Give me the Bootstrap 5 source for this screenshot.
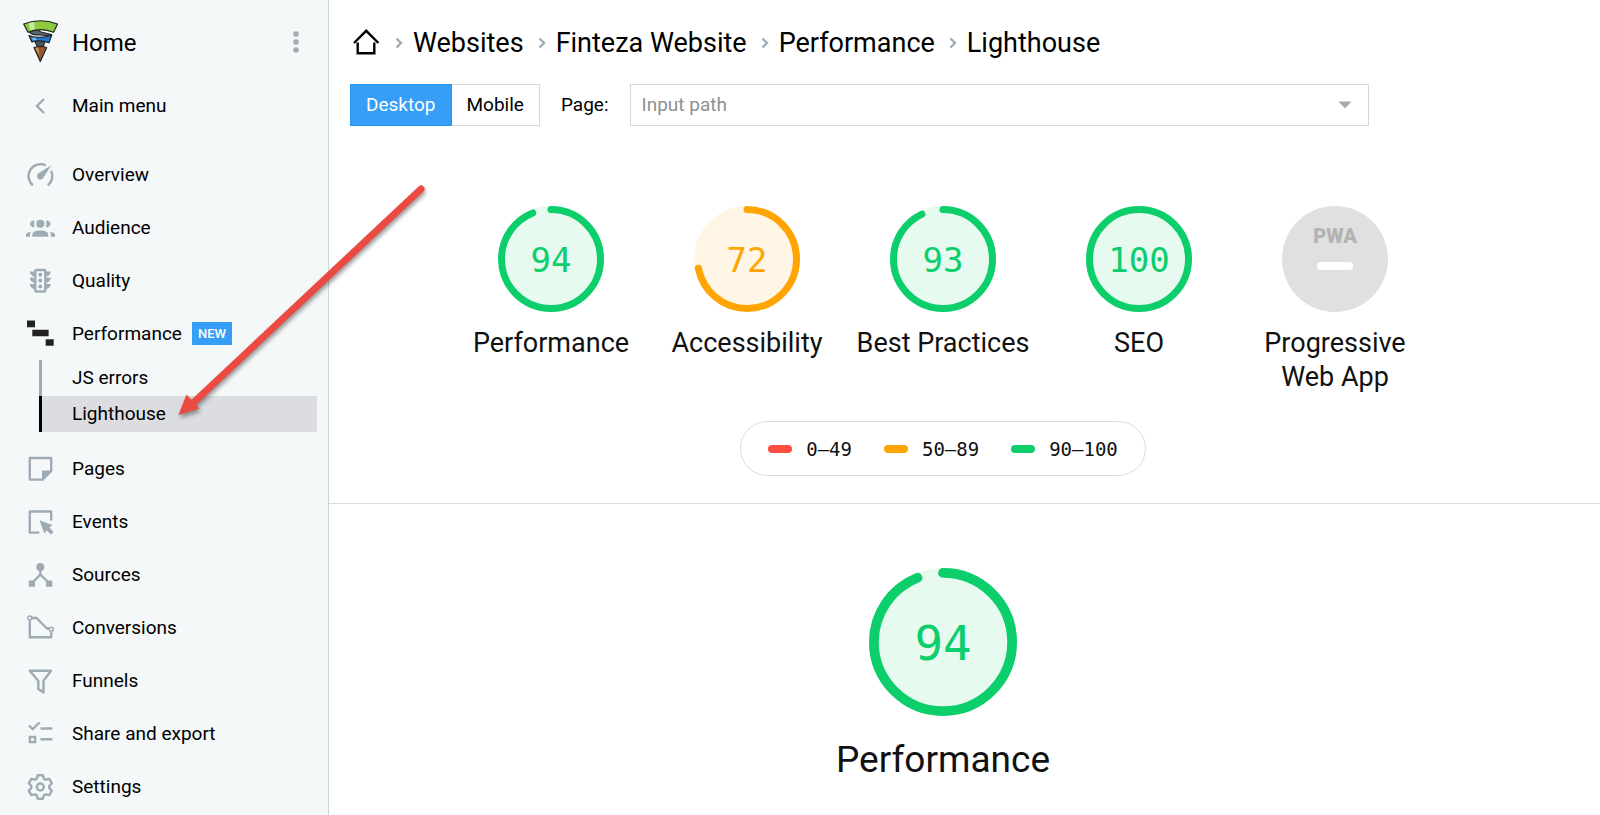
<!DOCTYPE html>
<html lang="en">
<head>
<meta charset="utf-8">
<meta name="viewport" content="width=device-width, initial-scale=1">
<title>Lighthouse – Finteza Website</title>
<link href="https://cdn.jsdelivr.net/npm/bootstrap@5.3.0/dist/css/bootstrap.min.css" rel="stylesheet">
<style>
  body { font-family: Roboto, sans-serif; font-size: 19px; line-height: 24px; color: #000; background: #fff; }
  a { color: inherit; text-decoration: none; }
  .sidebar { flex: 0 0 329px; background: #f4f8f9; border-right: 1px solid #cdd5db; }
  .side-head { height: 84px; padding-left: 23px; font-size: 24px; }
  .side-head span { padding: 2px 0 0 13px; }
  .side-link { display: flex; align-items: center; gap: 16px; height: 53px; padding-left: 24px; }
  .side-back { height: 43px; margin-bottom: 21px; }
  .side-icon { width: 32px; height: 32px; flex: none; fill: none; stroke: #9eabb5; stroke-width: 2.4; }
  .side-icon .solid { fill: #9eabb5; stroke: none; }
  .kebab { width: 32px; height: 32px; margin-right: 16px; fill: #9eabb5; }
  .tag-new { background: #369ef6; font-size: 13px; line-height: 15px; border-radius: 0; padding: 4px 6px; margin-left: -6px; font-weight: 500; }
  .sub-menu { margin: 0 11px 10px 39px; }
  .sub-menu a { display: block; height: 36px; line-height: 36px; padding-left: 30px; border-left: 3px solid #9eabb5; }
  .sub-menu a.active { background: #dcdde0; border-color: #000; }
  .crumbs { height: 84px; padding-left: 22px; font-size: 27px; line-height: 32px; }
  .crumbs .crumb { padding-top: 2px; }
  .crumb-sep { width: 8px; height: 12px; margin: 2px 10px 0 14px; fill: none; stroke: #9eabb5; stroke-width: 2.4; }
  .tools { padding-left: 21px; }
  .tools .btn { --bs-btn-font-size: 19px; --bs-btn-line-height: 24px; --bs-btn-border-radius: 0; --bs-btn-padding-x: 15px; --bs-btn-padding-y: 8px;
    --bs-btn-color: #000; --bs-btn-border-color: #d3d8de; --bs-btn-active-bg: #369ef6; --bs-btn-active-border-color: #2196f3; --bs-btn-active-color: #fff; }
  .tools label { padding: 0 21px; }
  .path-box { flex: 0 1 739px; height: 42px; border: 1px solid #d3d8de; }
  .path-box input { font-size: 19px; padding: 0 11px; border: 0; background: none; }
  .path-box input::placeholder { color: #8f9090; }
  .path-box button { width: 48px; }
  .report-part { padding-right: 43px; }
  .scores { padding-top: 80px; }
  .score-cell { width: 196px; font-size: 27px; line-height: 34px; color: #111; }
  .dial { display: block; width: 106px; height: 106px; margin: 0 auto 14px; }
  .dial-big { width: 148px; height: 148px; margin-bottom: 20px; }
  .dial circle.arc { fill: none; stroke: currentColor; stroke-width: 7; stroke-linecap: round; }
  .dial circle.disc { fill: currentColor; opacity: .1; }
  .dial text { font: 34px "DejaVu Sans Mono", monospace; fill: currentColor; text-anchor: middle; }
  .dial text.pwa { font: 900 20px Roboto, sans-serif; fill: #b3b3b3; }
  .pass { color: #0cce6b; }
  .average { color: #ffa400; }
  .legend-pill { height: 55px; padding: 0 27px; gap: 32px; border: 1px solid #dcdcdc; border-radius: 28px; margin: 27px auto; width: max-content;
    font-family: "DejaVu Sans Mono", monospace; font-size: 19px; color: #111; }
  .swatch { width: 24px; height: 8px; border-radius: 4px; margin-right: 14px; }
  .big-title { font-size: 37px; line-height: 48px; color: #111; }
  .big-score { border-top: 1px solid #dadcde; padding-top: 64px; }
  .pointer { position: absolute; left: 170px; top: 180px; width: 262px; height: 246px; pointer-events: none; filter: drop-shadow(1px 3px 2px rgba(0,0,0,.4)); }
</style>
</head>
<body>
<div class="d-flex min-vh-100 position-relative">
  <nav class="sidebar" aria-label="Main">
    <div class="side-head d-flex align-items-center">
      <a href="#" class="d-flex align-items-center">
        <svg width="36" height="44" viewBox="0 0 36 44" stroke="#222" stroke-width="1.2" stroke-linejoin="round" aria-hidden="true">
          <path fill="#5d6570" d="M6 11.5L14 9.5L18 12L28.500 14.500V16L17 15Q10 15 8 13.500Z"/>
          <path fill="#8bcb3c" d="M.7 4Q17.500-2.500 34.500 4L30.500 12.300Q17.500 7 5 12.300Z"/>
          <path fill="#c8eaa0" stroke="none" d="M5.500 3.300L11 2.100L12 9L7.500 10.300Z"/>
          <path fill="#4b5564" d="M11.500 20H22L20.500 26.500L14 26Z"/>
          <path fill="#2079cf" d="M6 15.500Q17.500 19.500 28.700 15L26 22.800Q17 19.500 8.700 21.800Z"/>
          <path fill="#7db8ee" stroke="none" d="M9 17.500L13 18.200L13.500 20L10 20.500Z"/>
          <path fill="#95592b" d="M11 27.500Q17 25.500 23.700 27.500L17.300 41.500Z"/>
          <path fill="#d09a68" stroke="none" d="M12.500 28L15 27.500L16.500 36Z"/>
        </svg>
        <span>Home</span>
      </a>
      <button class="btn p-0 border-0 ms-auto d-flex" aria-label="More">
        <svg class="kebab" viewBox="0 0 32 32"><circle cx="16" cy="8" r="2.800"/><circle cx="16" cy="16" r="2.800"/><circle cx="16" cy="24" r="2.800"/></svg>
      </button>
    </div>
    <a class="side-link side-back" href="#"><svg class="side-icon" viewBox="0 0 32 32"><path d="M20 9L13 16L20 23"/></svg>Main menu</a>
    <a class="side-link" href="#"><svg class="side-icon" viewBox="0 0 32 32"><path d="M8.800 26.300A12 12 0 0 1 21.700 6.300M27.200 11.800A12 12 0 0 1 23.800 26.300"/><path class="solid" d="M27.300 6.200L19.400 18.800A3.400 3.400 0 1 1 14.600 14.300Z"/></svg>Overview</a>
    <a class="side-link" href="#"><svg class="side-icon" viewBox="0 0 32 32"><g class="solid"><circle cx="16.300" cy="11.800" r="4.100"/><path d="M8.300 24.800V22.500C8.300 17 24.300 17 24.300 22.500V24.800ZM2 24.800V22.500Q2 20.500 6.800 20Q6 21 6 22.500V24.800ZM31 24.800V22.500Q31 20.500 26 20Q26.800 21 26.800 22.500V24.800ZM10.500 8.800A3.300 3.300 0 1 0 10.500 15Q9.600 12 10.500 8.800ZM22 8.800A3.300 3.300 0 1 1 22 15Q23 12 22 8.800Z"/></g></svg>Audience</a>
    <a class="side-link" href="#"><svg class="side-icon" viewBox="0 0 32 32"><rect x="11.300" y="5" width="10" height="21.500" rx="1"/><g class="solid"><circle cx="16.300" cy="9.700" r="2"/><circle cx="16.300" cy="15.600" r="2"/><circle cx="16.300" cy="21.500" r="2"/><path d="M5.700 6.500H10.500V11.800Q6.300 10.500 5.700 6.500ZM5.700 12.700H10.500V18Q6.300 16.700 5.700 12.700ZM5.700 19H10.500V24.300Q6.300 23 5.700 19ZM26.900 6.500H22.100V11.800Q26.300 10.500 26.900 6.500ZM26.900 12.700H22.100V18Q26.300 16.700 26.900 12.700ZM26.900 19H22.100V24.300Q26.300 23 26.900 19Z"/></g></svg>Quality</a>
    <a class="side-link" href="#"><svg class="side-icon" viewBox="0 0 32 32"><path stroke="none" fill="#222" d="M3 2.500H11V9.200H3ZM8.300 11.800H24.600V18.300H8.300ZM21.700 21.200H29.700V27.700H21.700Z"/></svg>Performance <span class="badge tag-new">NEW</span></a>
    <div class="sub-menu">
      <a href="#">JS errors</a>
      <a href="#" class="active" aria-current="page">Lighthouse</a>
    </div>
    <a class="side-link" href="#"><svg class="side-icon" viewBox="0 0 32 32"><path stroke-linejoin="round" d="M5.800 5H27.200V18L18.500 26.600H5.800Z"/><path class="solid" d="M18 17.500H28V18.500L19 27.500H18Z"/></svg>Pages</a>
    <a class="side-link" href="#"><svg class="side-icon" viewBox="0 0 32 32"><path stroke-linejoin="round" d="M15.300 26.600H5.800V5.500H27.200V14.500"/><path class="solid" d="M15.500 14.300L28.500 19L25.500 21.500L29.500 26L27 28.700L22.800 24.500L20.300 27.500Z"/></svg>Events</a>
    <a class="side-link" href="#"><svg class="side-icon" viewBox="0 0 32 32"><path d="M16.300 8V15.500L8 24M16.300 15.500L25 24"/><g class="solid"><circle cx="16.300" cy="8" r="4"/><path d="M4.700 21.500H11V27.800H4.700ZM22 21.500H28.300V27.800H22Z"/></g></svg>Sources</a>
    <a class="side-link" href="#"><svg class="side-icon" viewBox="0 0 32 32"><path stroke-linejoin="round" d="M5.800 8.500V25.300H27.200V20M8 6H12.500L23 16.500H25"/><g stroke-width="1.500"><circle cx="5.800" cy="6" r="2"/><circle cx="27.300" cy="17.300" r="2"/></g></svg>Conversions</a>
    <a class="side-link" href="#"><svg class="side-icon" viewBox="0 0 32 32"><path stroke-linejoin="round" d="M5.700 5.800H27L19.500 15.800V27.500L14.300 24V15.800Z"/></svg>Funnels</a>
    <a class="side-link" href="#"><svg class="side-icon" viewBox="0 0 32 32"><path d="M5 7.500L8.700 11L15.500 4.500M16.500 10.500H28.300M16.500 21.300H28.300M5.900 18.900H11.100V24.100H5.900Z"/></svg>Share and export</a>
    <a class="side-link" href="#"><svg class="side-icon" viewBox="-16.300 -16 32 32"><path stroke-linejoin="round" d="M-3.600-8.300L-2.500-11.800H2.500L3.600-8.300L5.400-7.300L9-8.100L11.500-3.700L9-1V1L11.500 3.700L9 8.100L5.400 7.300L3.600 8.300L2.500 11.800H-2.500L-3.600 8.300L-5.400 7.300L-9 8.100L-11.500 3.700L-9 1V-1L-11.500-3.700L-9-8.100L-5.400-7.300Z"/><circle r="3.500"/></svg>Settings</a>
  </nav>

  <main class="flex-grow-1">
    <nav class="crumbs d-flex align-items-center" aria-label="Breadcrumb">
      <a href="#" aria-label="Home" class="d-flex"><svg width="30" height="30" viewBox="0 0 30 30" fill="none" stroke="#000" stroke-width="2.400"><path d="M3 16L15.200 3.800L27.400 16M6.700 15.500V26.300H23.300V15.500"/></svg></a>
      <svg class="crumb-sep" viewBox="0 0 8 12"><path d="M1.500 1.500L6 6L1.500 10.500"/></svg><a class="crumb" href="#">Websites</a>
      <svg class="crumb-sep" viewBox="0 0 8 12"><path d="M1.500 1.500L6 6L1.500 10.500"/></svg><a class="crumb" href="#">Finteza Website</a>
      <svg class="crumb-sep" viewBox="0 0 8 12"><path d="M1.500 1.500L6 6L1.500 10.500"/></svg><a class="crumb" href="#">Performance</a>
      <svg class="crumb-sep" viewBox="0 0 8 12"><path d="M1.500 1.500L6 6L1.500 10.500"/></svg><a class="crumb" href="#">Lighthouse</a>
    </nav>

    <div class="tools d-flex align-items-center">
      <div class="btn-group" role="group" aria-label="Device">
        <button class="btn active" type="button">Desktop</button>
        <button class="btn" type="button">Mobile</button>
      </div>
      <label for="path">Page:</label>
      <div class="path-box d-flex">
        <input id="path" class="form-control shadow-none rounded-0" type="text" placeholder="Input path">
        <button class="btn p-0 border-0 d-flex align-items-center justify-content-center" type="button" aria-label="Show paths"><svg width="14" height="8" viewBox="0 0 14 8" fill="#9eabb5"><path d="M.5.500H13.500L7 7.500Z"/></svg></button>
      </div>
    </div>

    <section class="report-part scores">
      <div class="d-flex justify-content-center text-center">
        <div class="score-cell">
          <svg class="dial pass" viewBox="0 0 106 106"><circle class="disc" cx="53" cy="53" r="53"/><circle class="arc" cx="53" cy="53" r="49.500" pathLength="100" stroke-dasharray="94 100" transform="rotate(-90 53 53)"/><text x="53" y="66">94</text></svg>
          Performance
        </div>
        <div class="score-cell">
          <svg class="dial average" viewBox="0 0 106 106"><circle class="disc" cx="53" cy="53" r="53"/><circle class="arc" cx="53" cy="53" r="49.500" pathLength="100" stroke-dasharray="72 100" transform="rotate(-90 53 53)"/><text x="53" y="66">72</text></svg>
          Accessibility
        </div>
        <div class="score-cell">
          <svg class="dial pass" viewBox="0 0 106 106"><circle class="disc" cx="53" cy="53" r="53"/><circle class="arc" cx="53" cy="53" r="49.500" pathLength="100" stroke-dasharray="93 100" transform="rotate(-90 53 53)"/><text x="53" y="66">93</text></svg>
          Best Practices
        </div>
        <div class="score-cell">
          <svg class="dial pass" viewBox="0 0 106 106"><circle class="disc" cx="53" cy="53" r="53"/><circle class="arc" cx="53" cy="53" r="49.500"/><text x="53" y="66">100</text></svg>
          SEO
        </div>
        <div class="score-cell">
          <svg class="dial" viewBox="0 0 106 106"><circle cx="53" cy="53" r="53" fill="#e0e0e0"/><text class="pwa" x="53" y="37">PWA</text><rect x="35" y="56" width="36" height="8" rx="4" fill="#fff"/></svg>
          Progressive<br>Web App
        </div>
      </div>
      <div class="legend-pill d-flex align-items-center">
        <span class="d-flex align-items-center"><i class="swatch" style="background:#ff4e42"></i>0–49</span>
        <span class="d-flex align-items-center"><i class="swatch" style="background:#ffa400"></i>50–89</span>
        <span class="d-flex align-items-center"><i class="swatch" style="background:#0cce6b"></i>90–100</span>
      </div>
    </section>

    <section class="report-part big-score text-center">
      <svg class="dial dial-big pass" viewBox="0 0 106 106"><circle class="disc" cx="53" cy="53" r="53"/><circle class="arc" cx="53" cy="53" r="49.500" pathLength="100" stroke-dasharray="94 100" transform="rotate(-90 53 53)"/><text x="53" y="66">94</text></svg>
      <div class="big-title">Performance</div>
    </section>
  </main>

  <svg class="pointer" viewBox="170 180 262 246" aria-hidden="true">
    <path d="M421 189L192 404" stroke="#ea4a42" stroke-width="7" stroke-linecap="round"/>
    <path fill="#ea4a42" d="M178.500 415L186.500 394.500L199.500 408.500Z"/>
  </svg>
</div>
<script src="https://cdn.jsdelivr.net/npm/bootstrap@5.3.0/dist/js/bootstrap.bundle.min.js"></script>
</body>
</html>
